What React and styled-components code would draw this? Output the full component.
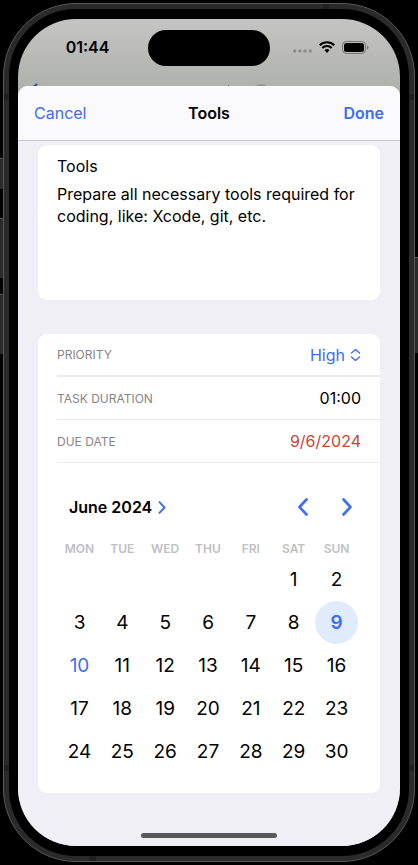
import React, { useState } from "react";
import styled, { createGlobalStyle } from "styled-components";

const BLUE = "#3c6df6";

const GlobalStyle = createGlobalStyle`
  * { box-sizing: border-box; }
  body {
    margin: 0;
    background: #000;
    color: #000;
    font-family: Inter, "Liberation Sans", sans-serif;
    font-size: 16px;
  }
  button, input, textarea, select {
    margin: 0;
    padding: 0;
    border: 0;
    background: none;
    color: inherit;
    font: inherit;
    outline-offset: 2px;
  }
  button, select { cursor: pointer; }
`;

const Stage = styled.main`
  position: relative;
  display: flex;
  min-height: 100vh;
  padding: 3px;
  background: #000;
`;

const SideButton = styled.span`
  position: absolute;
  ${(p) => p.$side}: 0;
  top: ${(p) => p.$top}px;
  width: 3px;
  height: ${(p) => p.$length}px;
  background: #2a2a2b;
  border-top: 1px solid #5a5a5a;
`;

const Device = styled.div`
  position: relative;
  display: flex;
  flex: 1;
  border: 1px solid #585858;
  border-radius: 73px;
  background: #2a2a2a;
  padding: 5px;
`;

const Antenna = styled.span`
  position: absolute;
  background: #1f1f1f;
  width: ${(p) => (p.$flat ? 6 : 5)}px;
  height: ${(p) => (p.$flat ? 5 : 6)}px;
  ${(p) => p.$place}
`;

const Bezel = styled.div`
  display: flex;
  flex: 1;
  padding: 10px 9px;
  border-radius: 67px;
  background: #000;
`;

const Screen = styled.div`
  display: flex;
  flex: 1;
  flex-direction: column;
  min-width: 0;
  overflow: hidden;
  border-radius: 58px;
  background: linear-gradient(#c4c4c4, #b0b2ac 67px);
`;

const StatusBar = styled.header`
  position: relative;
  display: grid;
  grid-template-columns: 1fr 122px 1fr;
  height: 67px;
  padding: 11px 0 20px;
  align-items: center;
`;

const Clock = styled.time`
  padding: 0 0 2px 9px;
  text-align: center;
  font-size: 16px;
  font-weight: 600;
`;

const Island = styled.div`
  height: 36px;
  border-radius: 18px;
  background: #000;
`;

const StatusIcons = styled.div`
  display: flex;
  align-items: center;
  justify-content: flex-end;
  gap: 7px;
  padding: 0 31px 2px 0;
`;

const Behind = styled.svg`
  position: absolute;
  left: ${(p) => p.$left};
  bottom: 0;
`;

const Sheet = styled.section`
  display: flex;
  flex: 1;
  flex-direction: column;
  border-radius: 10px 10px 0 0;
  overflow: hidden;
  background: #f0eff6;
`;

const NavBar = styled.nav`
  display: grid;
  grid-template-columns: 1fr auto 1fr;
  align-items: center;
  height: 55px;
  padding: 0 16px;
  border-bottom: 1px solid #c6c5cb;
  background: #faf9fd;
`;

const NavButton = styled.button`
  justify-self: ${(p) => (p.$primary ? "end" : "start")};
  color: ${BLUE};
  font-weight: ${(p) => (p.$primary ? 600 : 400)};
`;

const Title = styled.h1`
  margin: 0;
  font-size: 16px;
  font-weight: 600;
`;

const Form = styled.form`
  display: flex;
  flex: 1;
  flex-direction: column;
  gap: 34px;
  padding: 4px 20px 39px;
`;

const Card = styled.div`
  border-radius: 9px;
  background: #fff;
`;

const NoteCard = styled(Card)`
  display: flex;
  flex-direction: column;
  gap: 7px;
  padding: 11px 20px 11px 19px;
`;

const NameInput = styled.input`
  height: 20px;
  width: 100%;
`;

const NotesInput = styled.textarea`
  display: block;
  width: 100%;
  height: 106px;
  resize: none;
  overflow: hidden;
  line-height: 22px;
`;

const Row = styled.div`
  display: flex;
  align-items: center;
  justify-content: space-between;
  height: 43px;
  margin-left: 19px;
  padding-right: 19px;
  border-bottom: ${(p) => (p.$strong ? 2 : 1)}px solid #ebebec;
`;

const RowLabel = styled.label`
  color: #858589;
  font-size: 12px;
`;

const SelectWrap = styled.div`
  display: flex;
  align-items: center;
  gap: 5px;
  color: ${BLUE};
`;

const Select = styled.select`
  appearance: none;
  field-sizing: content;
`;

const ValueInput = styled.input`
  width: 120px;
  text-align: right;
  color: ${(p) => (p.$late ? "#cf4236" : "#000")};
`;

const CalendarHead = styled.div`
  display: flex;
  align-items: center;
  justify-content: space-between;
  height: 44px;
  margin-top: 22px;
  padding: 0 25px 0 31px;
`;

const MonthButton = styled.button`
  display: flex;
  align-items: center;
  gap: 6px;
  font-weight: 600;
`;

const Arrows = styled.div`
  display: flex;
  gap: 28px;
`;

const ArrowButton = styled.button`
  display: flex;
  width: 16px;
  height: 24px;
  align-items: center;
  justify-content: center;
`;

const CalendarBody = styled.div`
  padding: 9px 22px 20px 20px;
`;

const Month = styled.table`
  width: 100%;
  table-layout: fixed;
  border-collapse: collapse;
`;

const Weekday = styled.th`
  height: 20px;
  padding: 0;
  color: #c0c0c2;
  font-size: 12px;
  font-weight: 600;
`;

const DayCell = styled.td`
  height: 43px;
  padding: 0;
`;

const Day = styled.button`
  display: block;
  width: 43px;
  height: 43px;
  margin: 0 auto;
  border-radius: 50%;
  font-size: 19px;
  font-weight: ${(p) => (p.$selected ? 600 : 400)};
  color: ${(p) => (p.$selected || p.$today ? BLUE : "#000")};
  background: ${(p) => (p.$selected ? "#e0ebfe" : "transparent")};
`;

const HomeIndicator = styled.div`
  align-self: center;
  width: 136px;
  height: 5px;
  margin-bottom: 8px;
  border-radius: 3px;
  background: #5a5a5c;
`;

function Chevron({ left, width, height, stroke }) {
  return (
    <svg width={width} height={height} viewBox="0 0 10 18" aria-hidden="true">
      <path
        d={left ? "M8.500 1.500 1.500 9 8.500 16.500" : "M1.500 1.500 8.500 9 1.500 16.500"}
        fill="none"
        stroke={BLUE}
        strokeWidth={stroke}
        strokeLinecap="round"
        strokeLinejoin="round"
      />
    </svg>
  );
}

function Signals() {
  return (
    <StatusIcons>
      <svg width="19" height="12" viewBox="0 0 19 12" aria-hidden="true">
        {[1.7, 6.9, 12.1, 17.3].map((x) => (
          <circle key={x} cx={x} cy="10" r="1.7" fill="#8b8c89" />
        ))}
      </svg>
      <svg width="16" height="12" viewBox="0 0 16 12" aria-hidden="true">
        <path d="M0.700 4.300a10.300 10.300 0 0 1 14.600 0M3.300 7a6.600 6.600 0 0 1 9.400 0" fill="none" stroke="#000" strokeWidth="2.1" />
        <path d="M5.500 9.300a3.600 3.600 0 0 1 5 0L8 12Z" fill="#000" />
      </svg>
      <svg width="27" height="13" viewBox="0 0 27 13" aria-hidden="true">
        <rect x="0.5" y="0.5" width="23" height="12" rx="3.7" fill="none" stroke="#767774" />
        <rect x="2" y="2" width="20" height="9" rx="2.5" fill="#000" />
        <path d="M25 4.500c2 .7 2 3.300 0 4Z" fill="#767774" />
      </svg>
    </StatusIcons>
  );
}

const WEEKDAYS = ["MON", "TUE", "WED", "THU", "FRI", "SAT", "SUN"];
const WEEKS = Array.from({ length: 5 }, (_, week) =>
  Array.from({ length: 7 }, (_, day) => week * 7 + day - 4)
);

export default function App() {
  const [selected, setSelected] = useState(9);
  return (
    <Stage>
      <GlobalStyle />
      <SideButton $side="left" $top={158} $length={31} />
      <SideButton $side="left" $top={218} $length={60} />
      <SideButton $side="left" $top={294} $length={60} />
      <SideButton $side="right" $top={257} $length={96} />
      <Device>
        <Antenna $place="left: 0; top: 90px;" />
        <Antenna $place="right: 0; top: 90px;" />
        <Antenna $place="left: 0; bottom: 90px;" />
        <Antenna $place="right: 0; bottom: 90px;" />
        <Antenna $flat $place="right: 85px; top: 0;" />
        <Antenna $flat $place="left: 86px; bottom: 0;" />
        <Bezel>
          <Screen>
            <StatusBar>
              <Clock>01:44</Clock>
              <Island />
              <Signals />
              <Behind $left="14px" width="8" height="3" viewBox="0 0 8 3" aria-hidden="true">
                <path d="M1 3 4 .5Q6 0 5.500 2L4.500 3Z" fill="#2f57b8" />
              </Behind>
              <Behind $left="210px" width="2" height="1" viewBox="0 0 2 1" aria-hidden="true">
                <rect width="1" height="1" fill="#7b7c78" />
              </Behind>
              <Behind $left="237px" width="12" height="2" viewBox="0 0 12 2" aria-hidden="true">
                <path d="M0 2Q6-2 12 2Z" fill="#979894" />
              </Behind>
            </StatusBar>
            <Sheet>
              <NavBar>
                <NavButton type="button">Cancel</NavButton>
                <Title>Tools</Title>
                <NavButton type="button" $primary>Done</NavButton>
              </NavBar>
              <Form>
                <NoteCard>
                  <NameInput aria-label="Task name" defaultValue="Tools" />
                  <NotesInput
                    aria-label="Task notes"
                    spellCheck={false}
                    defaultValue="Prepare all necessary tools required for coding, like: Xcode, git, etc."
                  />
                </NoteCard>
                <Card>
                  <Row $strong>
                    <RowLabel htmlFor="priority">PRIORITY</RowLabel>
                    <SelectWrap>
                      <Select id="priority" defaultValue="High">
                        <option>High</option>
                        <option>Medium</option>
                        <option>Low</option>
                      </Select>
                      <svg width="11" height="14" viewBox="0 0 11 14" aria-hidden="true">
                        <path
                          d="M1.500 5 5.500 1.500 9.500 5M1.500 9 5.500 12.500 9.500 9"
                          fill="none"
                          stroke={BLUE}
                          strokeWidth="1.4"
                          strokeLinecap="round"
                          strokeLinejoin="round"
                        />
                      </svg>
                    </SelectWrap>
                  </Row>
                  <Row>
                    <RowLabel htmlFor="duration">TASK DURATION</RowLabel>
                    <ValueInput id="duration" defaultValue="01:00" />
                  </Row>
                  <Row>
                    <RowLabel htmlFor="due">DUE DATE</RowLabel>
                    <ValueInput id="due" $late readOnly value={`${selected}/6/2024`} />
                  </Row>
                  <CalendarHead>
                    <MonthButton type="button">
                      June 2024
                      <Chevron width={8} height={13} stroke={2.6} />
                    </MonthButton>
                    <Arrows>
                      <ArrowButton type="button" aria-label="Previous month">
                        <Chevron left width={12} height={18} stroke={2.6} />
                      </ArrowButton>
                      <ArrowButton type="button" aria-label="Next month">
                        <Chevron width={12} height={18} stroke={2.6} />
                      </ArrowButton>
                    </Arrows>
                  </CalendarHead>
                  <CalendarBody>
                    <Month>
                      <thead>
                        <tr>
                          {WEEKDAYS.map((name) => (
                            <Weekday key={name} scope="col">{name}</Weekday>
                          ))}
                        </tr>
                      </thead>
                      <tbody>
                        {WEEKS.map((week) => (
                          <tr key={week[0]}>
                            {week.map((day) => (
                              <DayCell key={day}>
                                {day > 0 && (
                                  <Day
                                    type="button"
                                    $selected={day === selected}
                                    $today={day === 10}
                                    onClick={() => setSelected(day)}
                                  >
                                    {day}
                                  </Day>
                                )}
                              </DayCell>
                            ))}
                          </tr>
                        ))}
                      </tbody>
                    </Month>
                  </CalendarBody>
                </Card>
              </Form>
              <HomeIndicator />
            </Sheet>
          </Screen>
        </Bezel>
      </Device>
    </Stage>
  );
}
